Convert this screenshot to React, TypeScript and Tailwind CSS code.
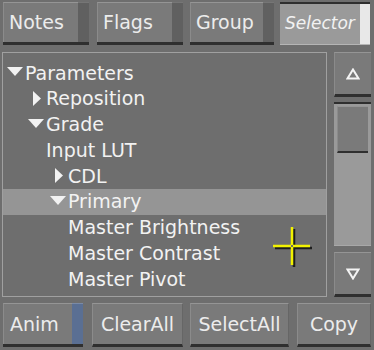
import React from "react";

type Row = { label: string; level: 0 | 1 | 2; icon?: "down" | "right"; selected?: boolean };

const rows: Row[] = [
  { label: "Parameters", level: 0, icon: "down" },
  { label: "Reposition", level: 1, icon: "right" },
  { label: "Grade", level: 1, icon: "down" },
  { label: "Input LUT", level: 1 },
  { label: "CDL", level: 2, icon: "right" },
  { label: "Primary", level: 2, icon: "down", selected: true },
  { label: "Master Brightness", level: 2 },
  { label: "Master Contrast", level: 2 },
  { label: "Master Pivot", level: 2 },
];

const indent = ["pl-[1px]", "pl-[22px]", "pl-[44px]"];

function TabButton({ label, width }: { label: string; width: string }) {
  return (
    <div className={`flex h-[43px] flex-col border-b-[3px] border-b-[#2f2f2f] ${width}`}>
      <div className="flex flex-1">
        <div className="flex flex-1 items-center border-l border-t border-l-[#8b8b8b] border-t-[#959595] bg-[#7a7a7a] pl-[5px] text-[19px] text-[#ececec]">
          {label}
        </div>
        <div className="w-[11px] border-t border-t-[#767676] bg-[#606060]" />
      </div>
    </div>
  );
}

function PlainButton({ label, width }: { label: string; width: string }) {
  return (
    <div
      className={`flex h-[44px] items-center justify-center border-b-[3px] border-l border-r border-t border-b-[#2f2f2f] border-l-[#8b8b8b] border-r-[#666666] border-t-[#959595] bg-[#7a7a7a] text-[19px] text-[#ececec] ${width}`}
    >
      {label}
    </div>
  );
}

function DownTri() {
  return (
    <svg width="16" height="9" viewBox="0 0 16 9" className="mr-[2px] mb-[2px]">
      <polygon points="0,0 16,0 8,9" fill="#f2f2f2" />
    </svg>
  );
}

function RightTri() {
  return (
    <svg width="8" height="15" viewBox="0 0 8 15" className="mr-[5px]">
      <polygon points="0,0 8,7.5 0,15" fill="#f2f2f2" />
    </svg>
  );
}

function ArrowBtn({ dir }: { dir: "up" | "down" }) {
  return (
    <div className="flex h-[45px] items-center justify-center border-b-[3px] border-l border-t border-b-[#2f2f2f] border-l-[#8b8b8b] border-t-[#959595] bg-[#7a7a7a]">
      <svg width="14" height="12" viewBox="0 0 14 12">
        {dir === "up" ? (
          <polygon points="7,1.5 12.5,10.5 1.5,10.5" fill="none" stroke="#f4f4f4" strokeWidth="2" />
        ) : (
          <polygon points="1.5,1.5 12.5,1.5 7,10.5" fill="none" stroke="#f4f4f4" strokeWidth="2" />
        )}
      </svg>
    </div>
  );
}

export default function App() {
  return (
    <div
      className="relative h-[350px] w-[374px] overflow-hidden bg-[#6e6e6e] select-none"
      style={{ fontFamily: '"DejaVu Sans", "Liberation Sans", sans-serif' }}
    >
      {/* top tabs */}
      <div className="flex pl-[3px] pt-[2px]">
        <TabButton label="Notes" width="w-[86px]" />
        <div className="w-[8px]" />
        <TabButton label="Flags" width="w-[86px]" />
        <div className="w-[7px]" />
        <TabButton label="Group" width="w-[84px]" />
        <div className="w-[6px]" />
        <div className="flex h-[43px] w-[90px] flex-col border-t-[2px] border-b border-t-[#2f2f2f] border-b-[#b5b5b5]">
          <div className="flex flex-1">
            <div className="flex flex-1 items-center bg-[#9a9a9a] pl-[5px] text-[17px] italic text-[#f2f2f2]">
              Selector
            </div>
            <div className="w-[10px] bg-[#e8e8e8]" />
          </div>
        </div>
      </div>

      {/* list + scrollbar */}
      <div className="mt-[7px] flex pl-[2px]">
        <div className="h-[245px] w-[325px] border border-[#a0a0a0] pt-[7px]">
          {rows.map((r) => (
            <div
              key={r.label}
              className={`flex h-[25.75px] items-center text-[19px] text-[#f2f2f2] ${indent[r.level]} ${
                r.selected ? "bg-[#959595]" : ""
              }`}
            >
              <div className="flex w-[21px] shrink-0 items-center justify-end">
                {r.icon === "down" && <DownTri />}
                {r.icon === "right" && <RightTri />}
              </div>
              <span className="whitespace-nowrap">{r.label}</span>
            </div>
          ))}
        </div>
        <div className="ml-[7px] flex h-[245px] w-[37px] flex-col">
          <ArrowBtn dir="up" />
          <div className="mt-[5px] flex h-[144px] flex-col border-t-[2px] border-b border-t-[#2f2f2f] border-b-[#a8a8a8] bg-[#9a9a9a] px-[3px] pt-[2px]">
            <div className="h-[47px] border-b-[2px] border-l border-t border-b-[#2f2f2f] border-l-[#8b8b8b] border-t-[#959595] bg-[#7a7a7a]" />
          </div>
          <div className="mt-[6px]">
            <ArrowBtn dir="down" />
          </div>
        </div>
      </div>

      {/* bottom buttons */}
      <div className="mt-[6px] flex pl-[3px]">
        <div className="flex h-[44px] w-[80px] border-b-[3px] border-b-[#2f2f2f]">
          <div className="flex flex-1 items-center border-l border-t border-l-[#8b8b8b] border-t-[#959595] bg-[#7a7a7a] pl-[6px] text-[19px] text-[#ececec]">
            Anim
          </div>
          <div className="w-[11px] border-t border-t-[#7a8aa6] bg-[#5a6f93]" />
        </div>
        <div className="w-[9px]" />
        <PlainButton label="ClearAll" width="w-[91px]" />
        <div className="w-[7px]" />
        <PlainButton label="SelectAll" width="w-[99px]" />
        <div className="w-[8px]" />
        <PlainButton label="Copy" width="w-[74px]" />
      </div>

      {/* crosshair cursor */}
      <svg className="absolute left-[272px] top-[226px]" width="42" height="42" viewBox="0 0 42 42">
        <line x1="3" y1="22" x2="40" y2="22" stroke="#1e1e1e" strokeWidth="2.5" />
        <line x1="22" y1="3" x2="22" y2="41" stroke="#1e1e1e" strokeWidth="2.5" />
        <line x1="1" y1="20" x2="38" y2="20" stroke="#f2f200" strokeWidth="2.5" />
        <line x1="20" y1="1" x2="20" y2="39" stroke="#f2f200" strokeWidth="2.5" />
        <rect x="19" y="19" width="2" height="2" fill="#6e6e6e" />
      </svg>
    </div>
  );
}
